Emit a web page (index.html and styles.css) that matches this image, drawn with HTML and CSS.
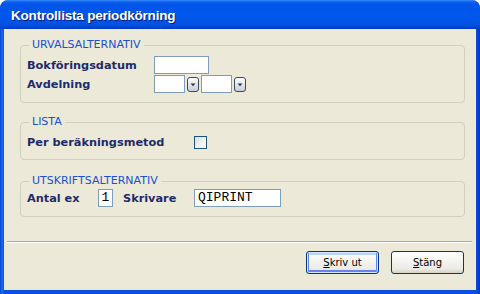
FILE: index.html
```html
<!DOCTYPE html>
<html>
<head>
<meta charset="utf-8">
<title>Kontrollista periodkörning</title>
<link rel="stylesheet" href="styles.css">
</head>
<body>
<div class="window">
  <div class="titlebar"><span class="title">Kontrollista periodkörning</span></div>
  <div class="client">
    <div class="content">
      <fieldset class="group g1">
        <legend>URVALSALTERNATIV</legend>
        <div class="row"><span class="lbl">Bokföringsdatum</span><span class="field w55"></span></div>
        <div class="row">
          <span class="lbl">Avdelning</span>
          <span class="field w31"></span>
          <svg class="drop" width="12" height="15" viewBox="0 0 12 15"><defs><linearGradient id="dg" x1="0" y1="0" x2="0" y2="1"><stop offset="0" stop-color="#ffffff"/><stop offset="1" stop-color="#c6ccd6"/></linearGradient></defs><rect x="0.5" y="0.5" width="11" height="14" rx="2.5" fill="url(#dg)" stroke="#3a4a68"/><path d="M3.5 6.5 H8.5 L6 9.3 Z" fill="#2a3650"/></svg>
          <span class="field w31 sp"></span>
          <svg class="drop" width="12" height="15" viewBox="0 0 12 15"><rect x="0.5" y="0.5" width="11" height="14" rx="2.5" fill="url(#dg)" stroke="#3a4a68"/><path d="M3.5 6.5 H8.5 L6 9.3 Z" fill="#2a3650"/></svg>
        </div>
      </fieldset>
      <fieldset class="group g2">
        <legend>LISTA</legend>
        <div class="row"><span class="lbl wide">Per beräkningsmetod</span><span class="check"></span></div>
      </fieldset>
      <fieldset class="group g3">
        <legend>UTSKRIFTSALTERNATIV</legend>
        <div class="row">
          <span class="lbl short">Antal ex</span>
          <span class="field w15 mono center">1</span>
          <span class="lbl short sk">Skrivare</span>
          <span class="field w87 mono">QIPRINT</span>
        </div>
      </fieldset>
    </div>
    <div class="sep"></div>
    <div class="buttons">
      <button class="btn default"><u>S</u>kriv ut</button>
      <button class="btn"><u>S</u>täng</button>
    </div>
  </div>
</div>
</body>
</html>
```

FILE: styles.css
```css
html, body {
  margin: 0;
  padding: 0;
}
body {
  width: 480px;
  height: 294px;
  overflow: hidden;
  background: #ffffff;
  font-family: "DejaVu Sans", Verdana, sans-serif;
}
.window {
  height: 294px;
  display: flex;
  flex-direction: column;
  background: linear-gradient(to right, #0a3fd0 0, #166ff0 2px, #0a4fe0 4px, #0a4fe0 calc(100% - 4px), #0831c8 100%);
  border-radius: 8px 8px 0 0;
  overflow: hidden;
}
.titlebar {
  height: 29px;
  flex: 0 0 29px;
  display: flex;
  align-items: center;
  padding-left: 11px;
  box-sizing: border-box;
  background: linear-gradient(to bottom, #3b8cf8 0, #0a5ff0 2px, #0055e8 5px, #0058ec 50%, #0053e2 85%, #0042cc 96%, #0036bb 100%);
  border-radius: 8px 8px 0 0;
}
.title {
  font-family: "Liberation Sans", Arial, sans-serif;
  font-weight: bold;
  font-size: 13.5px;
  color: #ffffff;
  text-shadow: 1px 1px 0 #0a1a80;
  letter-spacing: -0.2px;
  padding-top: 1px;
}
.client {
  flex: 1;
  margin: 0 4px 4px 4px;
  background: #ece9d8;
  display: flex;
  flex-direction: column;
}
.content {
  padding: 9px 11px 0 16px;
  display: flex;
  flex-direction: column;
}
.group {
  margin: 0;
  padding: 0 6px 0 6px;
  border: 1px solid #d0d0bf;
  border-radius: 4px;
  min-width: 0;
}
.group legend {
  font-size: 11px;
  line-height: 14px;
  color: #1a4fd0;
  padding: 0 3px;
  margin-left: 2px;
}
.g1 { padding-top: 4px; padding-bottom: 9px; }
.g2 { padding-top: 4px; padding-bottom: 8px; margin-top: 12px; }
.g3 { padding-top: 1px; padding-bottom: 9px; margin-top: 14px; }
.row {
  display: flex;
  align-items: center;
  height: 18px;
}
.row + .row { margin-top: 1px; }
.lbl {
  width: 127px;
  flex: 0 0 127px;
  font-weight: bold;
  font-size: 11.3px;
  color: #1c2b6c;
  white-space: nowrap;
}
.lbl.wide { width: 167px; flex-basis: 167px; }
.lbl.short { width: 71px; flex-basis: 71px; }
.lbl.sk { margin-left: 10px; }
.field {
  box-sizing: border-box;
  height: 18px;
  background: #ffffff;
  border: 1px solid #7f9db9;
  font-size: 13px;
  line-height: 16px;
  color: #000;
  padding-left: 3px;
}
.w55 { width: 55px; }
.w31 { width: 31px; }
.w15 { width: 15px; }
.w87 { width: 87px; }
.sp { margin-left: 2px; }
.drop { margin-left: 2px; display: block; }
.sp + .drop { margin-left: 2px; }
.mono { font-family: "Liberation Mono", "Courier New", monospace; }
.center { padding-left: 0; text-align: center; }
.check {
  box-sizing: border-box;
  width: 13px;
  height: 13px;
  border: 1px solid #1c5180;
  background: linear-gradient(135deg, #dcdcd7 0, #f2f2ee 60%, #ffffff 100%);
}
.sep {
  margin: 24px 4px 0 3px;
  border-top: 1px solid #aca899;
  border-bottom: 1px solid #ffffff;
}
.buttons {
  display: flex;
  justify-content: flex-end;
  gap: 12px;
  padding-right: 12px;
  margin-top: 8px;
}
.btn {
  width: 73px;
  height: 23px;
  box-sizing: border-box;
  border: 1px solid #003c74;
  border-radius: 3px;
  background: linear-gradient(to bottom, #ffffff 0, #f4f4f0 40%, #ecebe6 80%, #d6d0c5 100%);
  font-family: "DejaVu Sans", Verdana, sans-serif;
  font-size: 10px;
  color: #000;
  padding: 0;
}
.btn.default {
  box-shadow: inset 0 0 0 1px #cee7ff, inset 0 -1px 0 2px #6982ee, inset 0 1px 0 2px #bcd4f6;
}
```
